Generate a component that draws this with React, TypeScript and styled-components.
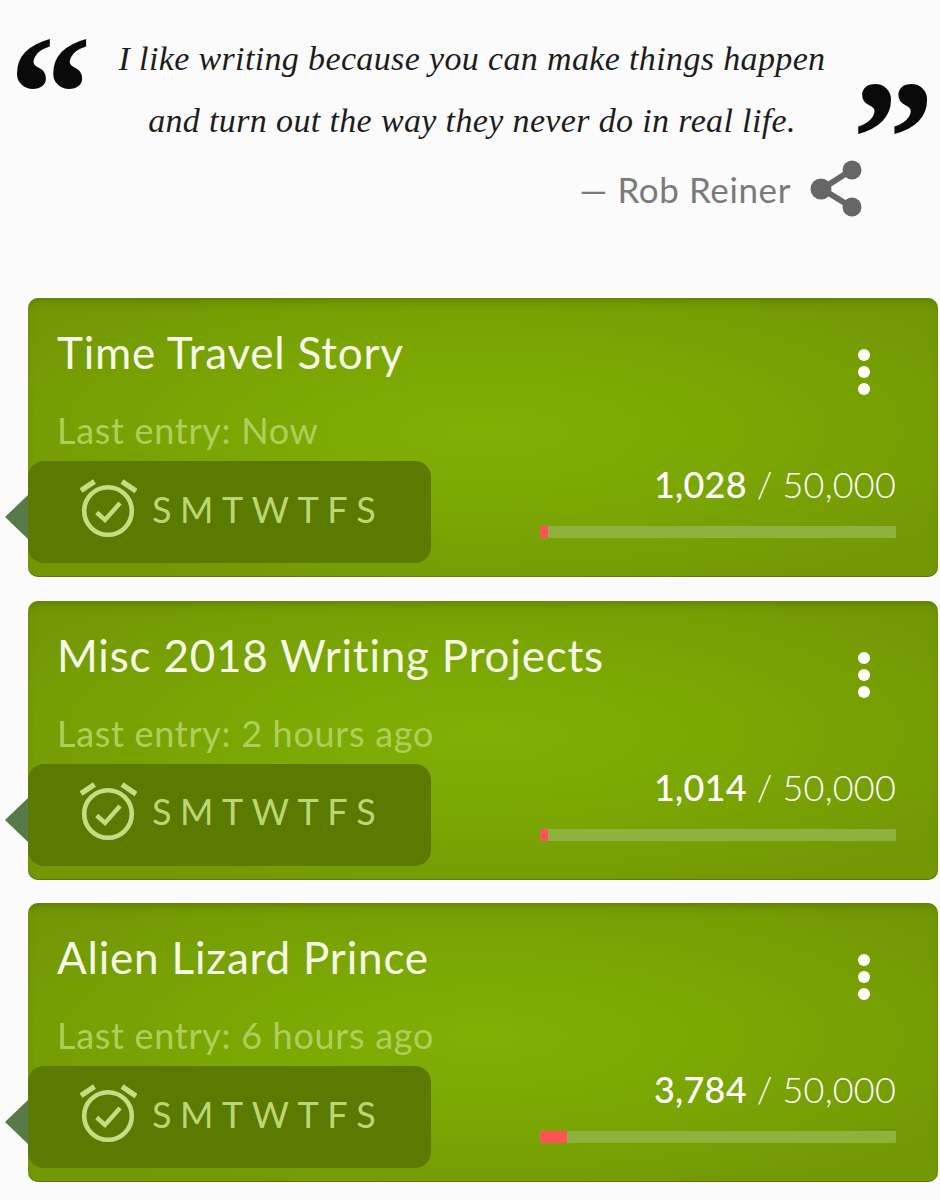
import React from "react";
import styled, { createGlobalStyle } from "styled-components";

const Global = createGlobalStyle`
  html, body { margin: 0; padding: 0; background: #fbfbfb; }
  body { width: 940px; height: 1200px; overflow: hidden; font-family: Lato, "Open Sans", sans-serif; }
`;

const Page = styled.div`
  width: 940px;
  height: 1200px;
  background: #fbfbfb;
  overflow: hidden;
`;

const Header = styled.header`
  height: 298px;
  box-sizing: border-box;
  padding: 28px 13px 0 17px;
`;

const QuoteRow = styled.div`
  display: flex;
  align-items: flex-start;
  height: 128px;
`;

const Mark = styled.span<{ $end?: boolean }>`
  flex: none;
  width: 70px;
  height: 130px;
  margin: ${(p) => (p.$end ? "46px 5px 0 -5px" : "1px 8px 0 -8px")};
  font-family: "Liberation Serif", serif;
  font-weight: 700;
  font-size: 165px;
  line-height: 130px;
  color: #0a0a0a;
  text-align: center;
`;

const QuoteText = styled.blockquote`
  flex: 1;
  margin: 0;
  text-align: center;
  font-family: "Liberation Serif", serif;
  font-style: italic;
  font-size: 34px;
  line-height: 62px;
  letter-spacing: 0.36px;
  color: #1d1d1d;
  white-space: nowrap;
`;

const Author = styled.div`
  display: flex;
  justify-content: flex-end;
  align-items: center;
  gap: 19px;
  margin-top: 4px;
  padding-right: 63px;
  font-size: 35px;
  letter-spacing: 0.6px;
  font-weight: 400;
  color: #7a7a7a;
`;

const Cards = styled.main`
  display: flex;
  flex-direction: column;
  gap: 23.5px;
  padding: 0 2px 0 28px;
`;

const Card = styled.article`
  position: relative;
  height: 279px;
  box-sizing: border-box;
  display: flex;
  flex-direction: column;
  padding: 27px 42px 14px 0;
  border-radius: 10px;
  background: radial-gradient(ellipse 60% 62% at 50% 48%, #80af04 0%, #7aa504 55%, #729804 100%);
  box-shadow: inset 0 7px 10px -5px rgba(70, 90, 0, 0.5), inset 0 -1px 0 rgba(80, 100, 30, 0.6);
`;

const TitleRow = styled.div`
  display: flex;
  justify-content: space-between;
  align-items: flex-start;
  padding-left: 29px;
`;

const Title = styled.h2`
  margin: 0;
  font-size: 44px;
  line-height: 54px;
  font-weight: 400;
  letter-spacing: 0.8px;
  color: #f6f9e6;
`;

const Dots = styled.div`
  display: flex;
  flex-direction: column;
  gap: 5px;
  margin: 24px 26px 0 0;
`;

const Dot = styled.span`
  width: 12px;
  height: 12px;
  border-radius: 50%;
  background: #fff;
`;

const LastEntry = styled.div`
  margin: 14px 0 9px;
  padding-left: 29px;
  font-size: 36px;
  line-height: 43px;
  font-weight: 400;
  letter-spacing: 0.7px;
  color: #aed05a;
`;

const BottomRow = styled.div`
  display: flex;
  justify-content: space-between;
  align-items: flex-start;
`;

const ReminderWrap = styled.div`
  position: relative;
`;

const Arrow = styled.span`
  position: absolute;
  left: -23px;
  top: 34px;
  width: 0;
  height: 0;
  border-style: solid;
  border-width: 22px 23px 22px 0;
  border-color: transparent #567a48 transparent transparent;
`;

const Reminder = styled.div`
  width: 403px;
  height: 102px;
  box-sizing: border-box;
  display: flex;
  align-items: center;
  gap: 15px;
  padding: 0 0 0 52px;
  border-radius: 16px;
  background: #5a7a02;
`;

const AlarmSvg = styled.svg`
  flex: none;
  margin-top: -7px;
`;

const Days = styled.div`
  display: flex;
  gap: 8.5px;
  font-size: 36px;
  font-weight: 400;
  color: #bcd673;
  line-height: 1;
  margin-top: -7px;
`;

const Progress = styled.div`
  width: 356px;
  display: flex;
  flex-direction: column;
  align-items: flex-end;
  margin-top: 2px;
`;

const Count = styled.div`
  font-size: 36px;
  line-height: 42px;
  font-weight: 300;
  letter-spacing: 0.2px;
  color: #ffffff;
`;

const Current = styled.span`
  font-weight: 500;
  color: #fff;
`;

const Track = styled.div`
  width: 100%;
  height: 12px;
  margin-top: 21px;
  background: #8fb13d;
`;

const Fill = styled.div`
  height: 100%;
  border-radius: 2px 0 0 2px;
  background: #ff5454;
`;

const AlarmIcon = () => (
  <AlarmSvg width="57" height="59" viewBox="0 0 57 59" fill="none" stroke="#c6dc82" strokeWidth="4.6">
    <circle cx="28" cy="32" r="23.8" />
    <path d="M1 11.5 L14.5 2.5 M42 2.5 L56 12" strokeWidth="5.2" />
    <path d="M16.7 33.5 L25 41 L40 24" strokeWidth="4.4" />
  </AlarmSvg>
);

const ShareIcon = () => (
  <svg width="54" height="58" viewBox="0 0 54 58" fill="#666">
    <path d="M12 29 L43 9 M12 29 L43 48" stroke="#666" strokeWidth="6" />
    <circle cx="11" cy="29" r="10.5" />
    <circle cx="42" cy="10" r="9.5" />
    <circle cx="42" cy="47" r="9.5" />
  </svg>
);

const projects = [
  { title: "Time Travel Story", last: "Now", words: 1028 },
  { title: "Misc 2018 Writing Projects", last: "2 hours ago", words: 1014 },
  { title: "Alien Lizard Prince", last: "6 hours ago", words: 3784 },
];

const GOAL = 50000;

export default function App() {
  return (
    <Page>
      <Global />
      <Header>
        <QuoteRow>
          <Mark>“</Mark>
          <QuoteText>
            I like writing because you can make things happen
            <br />
            and turn out the way they never do in real life.
          </QuoteText>
          <Mark $end>”</Mark>
        </QuoteRow>
        <Author>
          <span>— Rob Reiner</span>
          <ShareIcon />
        </Author>
      </Header>
      <Cards>
        {projects.map((p) => (
          <Card key={p.title}>
            <TitleRow>
              <Title>{p.title}</Title>
              <Dots>
                <Dot />
                <Dot />
                <Dot />
              </Dots>
            </TitleRow>
            <LastEntry>Last entry: {p.last}</LastEntry>
            <BottomRow>
              <ReminderWrap>
                <Arrow />
                <Reminder>
                  <AlarmIcon />
                  <Days>
                    {["S", "M", "T", "W", "T", "F", "S"].map((d, i) => (
                      <span key={i}>{d}</span>
                    ))}
                  </Days>
                </Reminder>
              </ReminderWrap>
              <Progress>
                <Count>
                  <Current>{p.words.toLocaleString("en-US")}</Current> / {GOAL.toLocaleString("en-US")}
                </Count>
                <Track>
                  <Fill style={{ width: `${Math.max((p.words / GOAL) * 100, 2.2)}%` }} />
                </Track>
              </Progress>
            </BottomRow>
          </Card>
        ))}
      </Cards>
    </Page>
  );
}
